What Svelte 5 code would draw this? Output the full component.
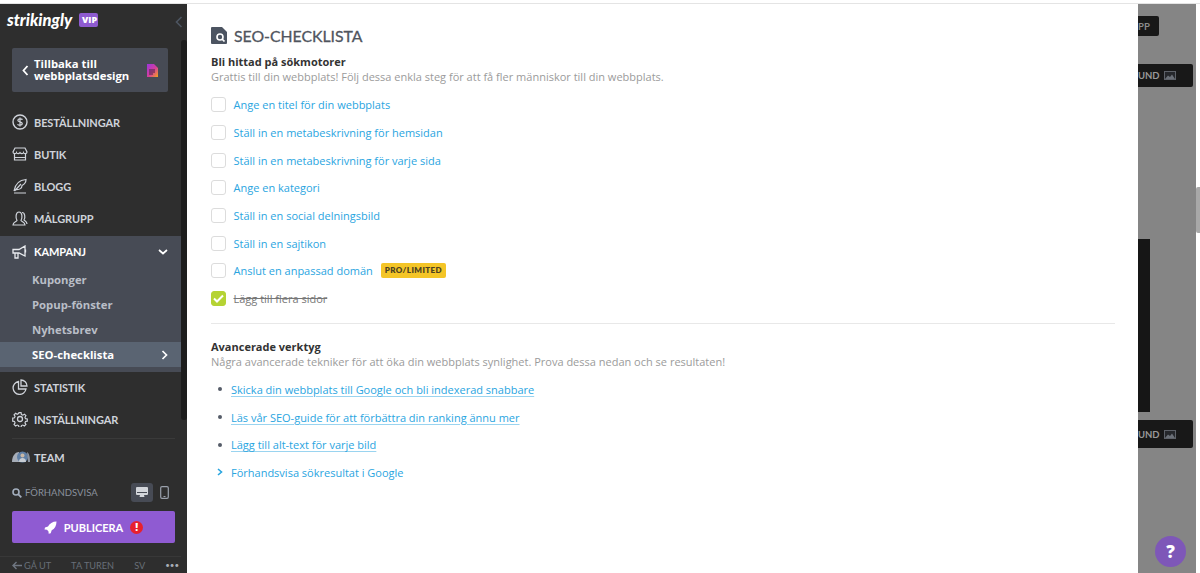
<script>
  const topNav = [
    { label: 'BESTÄLLNINGAR', icon: 'dollar' },
    { label: 'BUTIK', icon: 'store' },
    { label: 'BLOGG', icon: 'feather' },
    { label: 'MÅLGRUPP', icon: 'people' }
  ];
  const subNav = ['Kuponger', 'Popup-fönster', 'Nyhetsbrev'];
  const checks = [
    { text: 'Ange en titel för din webbplats' },
    { text: 'Ställ in en metabeskrivning för hemsidan' },
    { text: 'Ställ in en metabeskrivning för varje sida' },
    { text: 'Ange en kategori' },
    { text: 'Ställ in en social delningsbild' },
    { text: 'Ställ in en sajtikon' },
    { text: 'Anslut en anpassad domän', badge: 'PRO/LIMITED' },
    { text: 'Lägg till flera sidor', done: true }
  ];
  const tools = [
    'Skicka din webbplats till Google och bli indexerad snabbare',
    'Läs vår SEO-guide för att förbättra din ranking ännu mer',
    'Lägg till alt-text för varje bild'
  ];
</script>

<div class="page">
  <aside class="sidebar">
    <div class="brand">
      <span class="logo">strikingly</span>
      <span class="vip">VIP</span>
      <svg class="collapse" width="8" height="12" viewBox="0 0 8 12"><path d="M6.500 1 1.500 6l5 5" fill="none" stroke="#4d5561" stroke-width="1.600"/></svg>
    </div>

    <div class="scrollbar"></div>

    <button class="back">
      <svg width="7" height="11" viewBox="0 0 7 11"><path d="M5.500 1 1.500 5.500l4 4.500" fill="none" stroke="#fff" stroke-width="1.800"/></svg>
      <span>Tillbaka till<br />webbplatsdesign</span>
      <svg class="page-icon" width="11" height="13" viewBox="0 0 11 13">
        <defs><linearGradient id="pg" x1="0" y1="0" x2="1" y2="1"><stop offset="0" stop-color="#9b35e0"/><stop offset=".55" stop-color="#d63f9a"/><stop offset="1" stop-color="#f2a516"/></linearGradient></defs>
        <path d="M0 0h7l4 4v9H0z" fill="url(#pg)"/><path d="M2 6h6M2 8h6M2 10h4" stroke="#40283f" stroke-width="1"/>
      </svg>
    </button>

    <nav class="nav">
      {#each topNav as item}
        <div class="nav-row">
          <span class="nav-icon">
            {#if item.icon === 'dollar'}
              <svg width="16" height="16" viewBox="0 0 16 16"><circle cx="8" cy="8" r="7" fill="none" stroke="#cfd3da" stroke-width="1.400"/><path d="M10.500 5.600C10 4.700 6 4.300 5.800 6.200 5.700 8.200 10.500 7.500 10.300 9.800 10 11.600 6.200 11.300 5.500 10.200M8 3.500v9" fill="none" stroke="#cfd3da" stroke-width="1.200"/></svg>
            {:else if item.icon === 'store'}
              <svg width="16" height="14" viewBox="0 0 16 14"><path d="M3 1h10l2 4c0 2-3 2-3.500 .6C11 7 9 7 8 5.600 7 7 5 7 4.500 5.600 4 7 1 7 1 5zM2.500 7v6h11V7M2.500 10.500h11" fill="none" stroke="#cfd3da" stroke-width="1.200"/></svg>
            {:else if item.icon === 'feather'}
              <svg width="16" height="16" viewBox="0 0 16 16"><path d="M2 13C3 7 7 2 14 1.500 14 5 12 6.500 10 7.500 10 10 8 12 3.500 11.500M2 15h12M2.500 13 9 6" fill="none" stroke="#cfd3da" stroke-width="1.200"/></svg>
            {:else}
              <svg width="16" height="15" viewBox="0 0 16 15"><path d="M1 14c0-3 3-3 4-4.500C3.500 7 3.500 1 7 1s3.500 6 2 8.500c1 1.500 4 1.500 4 4.500zM10 1.500c3 0 3.500 5 2 7.500.8 1 3 1.300 3 4" fill="none" stroke="#cfd3da" stroke-width="1.200"/></svg>
            {/if}
          </span>
          {item.label}
        </div>
      {/each}

      <div class="group">
        <div class="nav-row open">
          <span class="nav-icon">
            <svg width="15" height="14" viewBox="0 0 15 14"><path d="M1 4.500h6L13 1v10L7 8H1zM3 8v5h3V8M13.500 4.500v3" fill="none" stroke="#e8eaee" stroke-width="1.300"/></svg>
          </span>
          KAMPANJ
          <svg class="chev" width="10" height="7" viewBox="0 0 10 7"><path d="M1 1.500 5 5l4-3.500" fill="none" stroke="#fff" stroke-width="1.700"/></svg>
        </div>
        {#each subNav as s}
          <div class="sub">{s}</div>
        {/each}
        <div class="sub active">
          SEO-checklista
          <svg class="chev" width="7" height="10" viewBox="0 0 7 10"><path d="M1.500 1 5.500 5l-4 4" fill="none" stroke="#fff" stroke-width="1.700"/></svg>
        </div>
      </div>

      <div class="nav-row">
        <span class="nav-icon">
          <svg width="16" height="16" viewBox="0 0 16 16"><path d="M6.500 2.500a6.500 6.500 0 1 0 7.500 7.500H6.500z M9 1a6 6 0 0 1 6 6H9z" fill="none" stroke="#cfd3da" stroke-width="1.300"/></svg>
        </span>
        STATISTIK
      </div>
      <div class="nav-row">
        <span class="nav-icon">
          <svg width="16" height="16" viewBox="0 0 16 16"><path d="M6.800 1h2.400l.4 2 1.500.7 1.800-1.100 1.700 1.700-1.100 1.800.6 1.500 2 .4v2.400l-2 .4-.6 1.500 1.100 1.800-1.700 1.700-1.800-1.100-1.500.6-.4 2H6.800l-.4-2-1.500-.6-1.800 1.100-1.700-1.700 1.100-1.800-.6-1.500-2-.4V7l2-.4.600-1.500-1.100-1.800 1.700-1.700 1.800 1.100 1.500-.7z" transform="translate(.8 .8) scale(.9)" fill="none" stroke="#cfd3da" stroke-width="1.300"/><circle cx="8" cy="8" r="2.500" fill="none" stroke="#cfd3da" stroke-width="1.300"/></svg>
        </span>
        INSTÄLLNINGAR
      </div>
      <div class="divider"></div>
      <div class="nav-row team">
        <span class="nav-icon">
          <svg width="20" height="12" viewBox="0 0 20 12"><path d="M1 11C1 4 5 1 8 1v10z" fill="#a6adb8"/><circle cx="11.500" cy="6" r="5.500" fill="#5f7fa5"/><path d="M8 11c0-3 1.500-4 3.500-4s3.500 1 3.500 4z" fill="#c7ccd3"/><circle cx="11.500" cy="4.500" r="2" fill="#c9b8a6"/><path d="M16 1c2 1 3 4 3 10h-2z" fill="#8b93a0"/></svg>
        </span>
        TEAM
      </div>
    </nav>

    <div class="preview">
      <svg width="10" height="10" viewBox="0 0 10 10"><circle cx="4" cy="4" r="3" fill="none" stroke="#a3aebd" stroke-width="1.600"/><path d="m6.300 6.300 3 3" stroke="#a3aebd" stroke-width="1.800"/></svg>
      <span class="preview-label">FÖRHANDSVISA</span>
      <span class="device on">
        <svg width="12" height="11" viewBox="0 0 12 11"><path d="M1 0h10a1 1 0 0 1 1 1v6a1 1 0 0 1-1 1H8l.5 2h-5L4 8H1a1 1 0 0 1-1-1V1a1 1 0 0 1 1-1z" fill="#d3d6db"/><path d="M1 5.500h10" stroke="#474b55"/></svg>
      </span>
      <span class="device">
        <svg width="9" height="13" viewBox="0 0 9 13"><rect x=".7" y=".7" width="7.600" height="11.600" rx="1.300" fill="none" stroke="#9aa1ac" stroke-width="1.200"/><path d="M3.500 10.500h2" stroke="#9aa1ac"/></svg>
      </span>
    </div>

    <button class="publish">
      <svg width="13" height="13" viewBox="0 0 13 13"><path d="M12.500.5C8.500.5 5.500 2.500 4 5.500L1 6.500 .5 8.500l2.500.2L4.500 10.500l.2 2.300 2-.6 1-2.900c3-1.500 4.800-4.500 4.800-8.800z" fill="#fff"/></svg>
      PUBLICERA
      <span class="alert">!</span>
    </button>

    <div class="foot">
      <span class="out"><svg width="10" height="9" viewBox="0 0 10 9"><path d="M4.500 1 1 4.500 4.500 8M1 4.500h9" fill="none" stroke="#6f7681" stroke-width="1.400"/></svg>GÅ UT</span>
      <span>TA TUREN</span>
      <span>SV</span>
      <span class="dots">•••</span>
    </div>
  </aside>

  <main class="panel">
    <h1>
      <svg width="16" height="17" viewBox="0 0 16 17"><path d="M1 0h10l5 5v11a1 1 0 0 1-1 1H1a1 1 0 0 1-1-1V1a1 1 0 0 1 1-1z" fill="#4c5461"/><circle cx="9" cy="10" r="3" fill="none" stroke="#fff" stroke-width="1.600"/><path d="m11 12 2.500 2.500" stroke="#fff" stroke-width="1.700"/></svg>
      SEO-CHECKLISTA
    </h1>

    <h2>Bli hittad på sökmotorer</h2>
    <p class="lead">Grattis till din webbplats! Följ dessa enkla steg för att få fler människor till din webbplats.</p>

    <ul class="checks">
      {#each checks as c}
        <li>
          <span class="box" class:done={c.done}>
            {#if c.done}
              <svg width="11" height="9" viewBox="0 0 11 9"><path d="m1 4.500 3 3 6-6" fill="none" stroke="#fff" stroke-width="2"/></svg>
            {/if}
          </span>
          <span class="check-text" class:struck={c.done}>{c.text}</span>
          {#if c.badge}<span class="badge">{c.badge}</span>{/if}
        </li>
      {/each}
    </ul>

    <hr />

    <h2>Avancerade verktyg</h2>
    <p class="lead">Några avancerade tekniker för att öka din webbplats synlighet. Prova dessa nedan och se resultaten!</p>

    <ul class="tools">
      {#each tools as t}
        <li><span class="dot"></span><span class="tool-link">{t}</span></li>
      {/each}
      <li>
        <svg class="more" width="6" height="8" viewBox="0 0 6 8"><path d="M1 1 4.500 4 1 7" fill="none" stroke="#2aa5df" stroke-width="1.600"/></svg>
        <span class="plain">Förhandsvisa sökresultat i Google</span>
      </li>
    </ul>
  </main>

  <section class="canvas">
    <div class="chip app">PP</div>
    <div class="chip bg one">
      UND
      <svg width="12" height="9" viewBox="0 0 12 9"><rect x=".5" y=".5" width="11" height="8" fill="#25272b" stroke="#5d6168"/><path d="M1 8 4 4.500 6 6l2-2.500L11 8z" fill="#6a6f77"/></svg>
    </div>
    <div class="block"></div>
    <div class="chip bg two">
      UND
      <svg width="12" height="9" viewBox="0 0 12 9"><rect x=".5" y=".5" width="11" height="8" fill="#25272b" stroke="#5d6168"/><path d="M1 8 4 4.500 6 6l2-2.500L11 8z" fill="#6a6f77"/></svg>
    </div>
    <div class="help">?</div>
  </section>

  <div class="edge"><div class="thumb"></div></div>
</div>

<style>
  :global(body) {
    margin: 0;
    background: #fff;
  }
  .page {
    display: grid;
    grid-template-columns: 187px 951px 58px 4px;
    box-sizing: border-box;
    height: 570px;
    margin-top: 3px;
    position: relative;
    overflow: hidden;
    font-family: "Open Sans", sans-serif;
    border-top: 1px solid #e4e4e4;
  }
  .sidebar {
    background: #2e2e2e;
    position: relative;
    display: flex;
    flex-direction: column;
    font-family: Lato, sans-serif;
  }
  .brand {
    display: flex;
    align-items: center;
    height: 28px;
    margin-top: 2px;
    padding-left: 7px;
    position: relative;
  }
  .logo {
    font: italic 900 16.500px Lato, sans-serif;
    color: #fff;
    width: 72px;
  }
  .vip {
    background: #8e5bd0;
    color: #fff;
    font: 800 9px "Open Sans", sans-serif;
    padding: 1px 3px;
    width: 13px;
    text-align: center;
    border-radius: 2px;
    line-height: 12px;
  }
  .collapse {
    position: absolute;
    left: 175px;
    top: 10px;
  }
  .scrollbar {
    position: absolute;
    left: 181px;
    top: 36px;
    width: 6px;
    height: 380px;
    background: #1d1d1d;
    border-radius: 3px;
  }
  .back {
    display: flex;
    align-items: center;
    width: 156px;
    height: 44px;
    margin: 14px 0 0 12px;
    padding: 0 0 0 10px;
    border: 0;
    border-radius: 2px;
    background: #474b55;
    color: #fff;
    font: 700 11.300px/12px "Open Sans", sans-serif;
    text-align: left;
  }
  .back > span {
    margin-left: 5px;
    width: 113px;
  }
  .nav {
    margin-top: 14px;
    width: 181px;
  }
  .nav-row {
    display: flex;
    align-items: center;
    height: 32px;
    padding-left: 12px;
    color: #cfd3da;
    font-weight: 700;
    font-size: 11px;
    letter-spacing: -.1px;
    position: relative;
  }
  .nav-icon {
    width: 22px;
    display: flex;
    align-items: center;
  }
  .group {
    background: #474b55;
    margin-top: 2px;
    padding-bottom: 5px;
    margin-bottom: -1px;
  }
  .open {
    color: #fff;
    height: 31px;
  }
  .chev {
    position: absolute;
    right: 13px;
    top: 50%;
    transform: translateY(-50%);
  }
  .sub {
    height: 25px;
    padding-left: 32px;
    color: #b9bec7;
    font: 700 11.300px/25px "Open Sans", sans-serif;
    position: relative;
  }
  .active {
    background: #5a6472;
    color: #fff;
  }
  .divider {
    height: 1px;
    background: #3a3a3a;
    margin: 3px 6px 3px 12px;
  }
  .team {
    height: 30px;
  }
  .team .nav-icon {
    margin-left: -1px;
    width: 23px;
  }
  .preview {
    position: absolute;
    left: 12px;
    top: 479px;
    width: 163px;
    height: 19px;
    display: flex;
    align-items: center;
    color: #8b929d;
  }
  .preview-label {
    margin-left: 3px;
    font-size: 9.500px;
    white-space: nowrap;
  }
  .device {
    width: 22px;
    height: 19px;
    display: flex;
    align-items: center;
    justify-content: center;
    border-radius: 3px;
  }
  .device.on {
    background: #474b55;
    margin-left: auto;
  }
  .publish {
    position: absolute;
    left: 12px;
    top: 507px;
    width: 163px;
    height: 32px;
    border: 0;
    border-radius: 2px;
    background: #8f5bd2;
    color: #fff;
    font: 700 11px Lato, sans-serif;
    display: flex;
    align-items: center;
    justify-content: center;
    gap: 7px;
  }
  .alert {
    width: 13px;
    height: 13px;
    border-radius: 50%;
    background: #e8202e;
    color: #fff;
    font: 800 10px/13px "Open Sans", sans-serif;
  }
  .foot {
    position: absolute;
    left: 0;
    right: 6px;
    bottom: 0;
    height: 16px;
    border-top: 1px solid #383838;
    display: flex;
    align-items: center;
    padding-left: 12px;
    gap: 20px;
    color: #686e78;
    font-size: 9.200px;
    white-space: nowrap;
  }
  .out {
    display: flex;
    align-items: center;
    gap: 2px;
  }
  .dots {
    color: #a8adb5;
    font-size: 8px;
  }
  .panel {
    background: #fff;
    padding: 0 23px 0 24px;
    color: #9a9a9a;
    font-size: 11px;
  }
  h1 {
    display: flex;
    align-items: center;
    gap: 7px;
    margin: 23px 0 0;
    height: 17px;
    font: 400 15.800px Lato, sans-serif;
    -webkit-text-stroke: .3px #50555e;
    color: #50555e;
  }
  h2 {
    margin: 0;
    font-size: 11px;
    line-height: 15px;
    font-weight: 700;
    color: #333;
  }
  h1 + h2 {
    margin-top: 10px;
  }
  .lead {
    margin: 0;
    line-height: 15px;
    font-size: 11px;
    color: #9b9b9b;
  }
  .checks {
    list-style: none;
    margin: 7px 0 0;
    padding: 0;
  }
  .checks li {
    display: flex;
    align-items: center;
    height: 27.700px;
  }
  .box {
    width: 13px;
    height: 13px;
    border: 1px solid #dcdcdc;
    border-radius: 3px;
    margin-right: 7.500px;
    display: flex;
    align-items: center;
    justify-content: center;
  }
  .box.done {
    background: #b5d334;
    border-color: #b5d334;
  }
  .check-text {
    color: #2aa5df;
  }
  .struck {
    color: #777;
    text-decoration: line-through;
  }
  .badge {
    margin-left: 8px;
    background: #f4c527;
    color: #4c4120;
    font: 800 8px/15px Lato, sans-serif;
    padding: 0 4px;
    border-radius: 2px;
    letter-spacing: .4px;
  }
  hr {
    border: 0;
    height: 1px;
    background: #e8e8e8;
    margin: 10px 0 15px;
  }
  .tools {
    list-style: none;
    margin: 7px 0 0;
    padding: 0;
  }
  .tools li {
    display: flex;
    align-items: center;
    height: 27.700px;
  }
  .dot {
    width: 4px;
    height: 4px;
    border-radius: 50%;
    background: #555c68;
    margin: 0 9px 0 7px;
  }
  .tool-link {
    color: #2aa5df;
    text-decoration: underline;
    text-underline-offset: 2px;
    text-decoration-color: #9ad4f0;
  }
  .more {
    margin: 0 8px 0 6px;
  }
  .plain {
    color: #2aa5df;
  }
  .canvas {
    background: #858585;
    position: relative;
  }
  .chip {
    position: absolute;
    left: 0;
    background: #181818;
    color: #8b8b8b;
    font: 700 9.500px Lato, sans-serif;
    display: flex;
    align-items: center;
    border-radius: 0 2px 2px 0;
  }
  .app {
    top: 12px;
    width: 21px;
    height: 20px;
  }
  .bg {
    width: 55px;
    gap: 4px;
    color: #999;
  }
  .one {
    top: 60px;
    height: 23px;
  }
  .two {
    top: 416px;
    height: 28px;
  }
  .block {
    position: absolute;
    left: 0;
    top: 235px;
    width: 12px;
    height: 173px;
    background: #161616;
  }
  .edge {
    background: #fff;
    position: relative;
  }
  .thumb {
    position: absolute;
    top: 183px;
    left: 0;
    width: 4px;
    height: 46px;
    background: #a8a8a8;
    border-radius: 2px 0 0 2px;
  }
  .help {
    position: absolute;
    left: 17px;
    top: 532px;
    width: 31px;
    height: 31px;
    border-radius: 50%;
    background: #7e57b8;
    color: #fff;
    font: 800 17px/31px "Open Sans", sans-serif;
    text-align: center;
    z-index: 1;
  }
</style>
